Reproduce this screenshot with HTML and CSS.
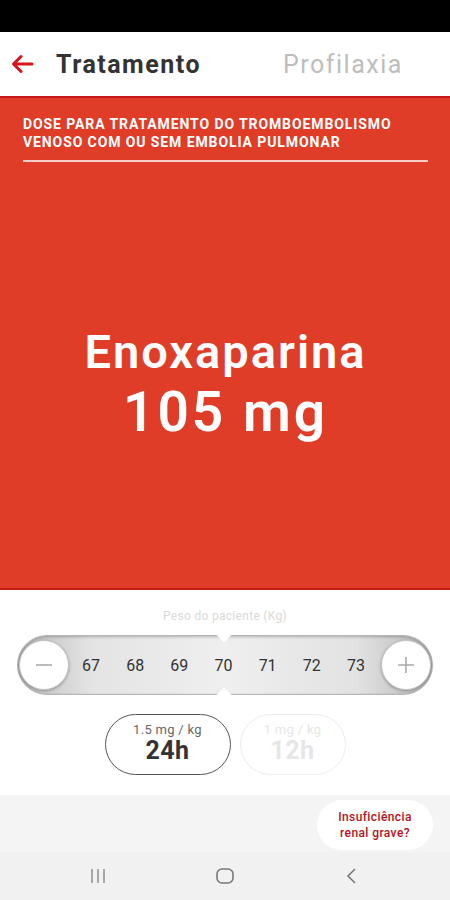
FILE: index.html
```html
<!DOCTYPE html>
<html lang="pt">
<head>
  <meta charset="UTF-8" />
  <meta name="viewport" content="width=device-width, initial-scale=1.0"/>
  <title>Enoxaparina - Tratamento</title>
  <link rel="stylesheet" href="styles.css">
</head>
<body>

  <!-- Status bar -->
  <div class="status-bar"></div>

  <!-- Header tabs -->
  <header class="header">
    <span class="back">
      <svg width="24" height="20" viewBox="0 0 24 20">
        <path d="M22 10H4M11 2.5L3.5 10L11 17.5" fill="none" stroke="#d4141c" stroke-width="3" stroke-linecap="round" stroke-linejoin="round"/>
      </svg>
    </span>
    <span class="tab active">Tratamento</span>
    <span class="tab">Profilaxia</span>
  </header>

  <!-- Dose panel -->
  <section class="dose">
    <h2 class="dose-title">Dose para tratamento do tromboembolismo venoso com ou sem embolia pulmonar</h2>
    <div class="dose-value">
      <div class="drug">Enoxaparina</div>
      <div class="amount">105 mg</div>
    </div>
  </section>

  <!-- Weight picker -->
  <section class="picker">
    <p class="picker-label">Peso do paciente (Kg)</p>
    <div class="slider">
      <button class="round">
        <svg width="20" height="20" viewBox="0 0 20 20"><path d="M2 10H18" stroke="#aaa" stroke-width="1.6"/></svg>
      </button>
      <div class="numbers">
        <span>67</span><span>68</span><span>69</span><span>70</span><span>71</span><span>72</span><span>73</span>
      </div>
      <button class="round">
        <svg width="20" height="20" viewBox="0 0 20 20"><path d="M2 10H18M10 2V18" stroke="#aaa" stroke-width="1.6"/></svg>
      </button>
    </div>

    <div class="modes">
      <div class="mode selected">
        <span class="mode-dose">1.5 mg / kg</span>
        <span class="mode-time">24h</span>
      </div>
      <div class="mode">
        <span class="mode-dose">1 mg / kg</span>
        <span class="mode-time">12h</span>
      </div>
    </div>
  </section>

  <!-- Footer -->
  <div class="footer">
    <div class="renal">Insuficiência<br>renal grave?</div>
  </div>

  <!-- Android nav bar -->
  <nav class="navbar">
    <svg width="20" height="18" viewBox="0 0 20 18"><path d="M4 2V16M10 2V16M16 2V16" stroke="#888" stroke-width="1.4"/></svg>
    <svg width="20" height="18" viewBox="0 0 20 18"><rect x="2" y="2" width="16" height="14" rx="5" fill="none" stroke="#777" stroke-width="1.6"/></svg>
    <svg width="20" height="18" viewBox="0 0 20 18"><path d="M13 2L6 9L13 16" fill="none" stroke="#777" stroke-width="1.6"/></svg>
  </nav>

</body>
</html>
```

FILE: styles.css
```css
body, html {
  margin: 0;
  padding: 0;
  width: 100%;
  height: 100%;
}

body {
  font-family: Roboto, "Liberation Sans", sans-serif;
  background: #fff;
  display: flex;
  flex-direction: column;
  height: 900px;
}

.status-bar {
  height: 32px;
  background: #000;
}

.header {
  height: 64px;
  display: flex;
  align-items: center;
  border-bottom: 2px solid #c8161d;
}

.back {
  display: flex;
  width: 56px;
  padding-left: 10px;
  box-sizing: border-box;
}

.tab {
  font-size: 25px;
  color: #bdbdbd;
  letter-spacing: 1.5px;
}

.tab.active {
  font-weight: bold;
  color: #333;
  margin-right: 82px;
}

.dose {
  background: #df3d28;
  height: 492px;
  border-bottom: 2px solid #c41e14;
  box-sizing: border-box;
  padding: 17px 22px 0 23px;
  display: flex;
  flex-direction: column;
  color: #fff;
}

.dose-title {
  margin: 0;
  font-size: 14px;
  line-height: 18px;
  font-weight: bold;
  letter-spacing: 0.9px;
  text-transform: uppercase;
  padding-bottom: 9px;
  border-bottom: 2px solid rgba(255, 255, 255, 0.75);
}

.dose-value {
  flex: 1;
  display: flex;
  flex-direction: column;
  align-items: center;
  justify-content: center;
  padding-top: 14px;
}

.drug {
  font-size: 47px;
  font-weight: 600;
  line-height: 60px;
  letter-spacing: 2px;
}

.amount {
  font-size: 55px;
  font-weight: 600;
  line-height: 60px;
  letter-spacing: 3px;
}

.picker {
  flex: 0 0 205px;
  display: flex;
  flex-direction: column;
  align-items: center;
}

.picker-label {
  margin: 19px 0 12px;
  font-size: 12px;
  color: #d9d9d9;
  letter-spacing: 0.3px;
}

.slider {
  position: relative;
  width: 416px;
  height: 60px;
  box-sizing: border-box;
  border-radius: 30px;
  border: 1px solid #b5b5b5;
  background: linear-gradient(90deg, #bdbdbd 0%, #e4e4e4 18%, #efefef 50%, #e2e2e2 82%, #b8b8b8 100%);
  box-shadow: inset 0 1px 3px rgba(0, 0, 0, 0.25);
  display: flex;
  align-items: center;
  padding: 0 1px;
}

.slider::before,
.slider::after {
  content: "";
  position: absolute;
  left: 200px;
  width: 12px;
  height: 12px;
  background: #fff;
  transform: rotate(45deg);
}

.slider::before {
  top: -8px;
}

.slider::after {
  bottom: -8px;
}

.round {
  width: 50px;
  height: 50px;
  border-radius: 50%;
  border: 1px solid #c4c4c4;
  background: #fff;
  box-shadow: 0 1px 3px rgba(0, 0, 0, 0.3);
  display: flex;
  align-items: center;
  justify-content: center;
  padding: 0;
}

.numbers {
  flex: 1;
  display: flex;
  justify-content: space-between;
  padding: 0 16px 0 13px;
  font-size: 16px;
  color: #333;
}

.modes {
  display: flex;
  gap: 9px;
  margin-top: 19px;
}

.mode {
  width: 106px;
  height: 61px;
  box-sizing: border-box;
  border-radius: 31px;
  border: 1px solid #ececec;
  display: flex;
  flex-direction: column;
  align-items: center;
  justify-content: center;
  padding-bottom: 2px;
  color: #e6e6e6;
}

.mode.selected {
  width: 126px;
  border-color: #555;
  color: #333;
}

.mode-dose {
  font-size: 13px;
  letter-spacing: 0.3px;
  color: inherit;
}

.mode.selected .mode-dose {
  color: #666;
}

.mode-time {
  font-size: 25px;
  font-weight: bold;
  line-height: 28px;
  letter-spacing: 0.5px;
}

.footer {
  flex: 1;
  background: #f4f4f4;
  display: flex;
  justify-content: flex-end;
  align-items: flex-start;
  padding: 5px 17px 0 0;
}

.renal {
  background: #fff;
  border-radius: 26px;
  width: 116px;
  height: 50px;
  display: flex;
  align-items: center;
  justify-content: center;
  text-align: center;
  font-size: 12px;
  font-weight: 500;
  letter-spacing: 0.4px;
  line-height: 16px;
  color: #b3121b;
}

.navbar {
  height: 48px;
  background: #f1f1f1;
  display: flex;
  justify-content: space-between;
  align-items: center;
  padding: 0 88px 0 88px;
}
```
